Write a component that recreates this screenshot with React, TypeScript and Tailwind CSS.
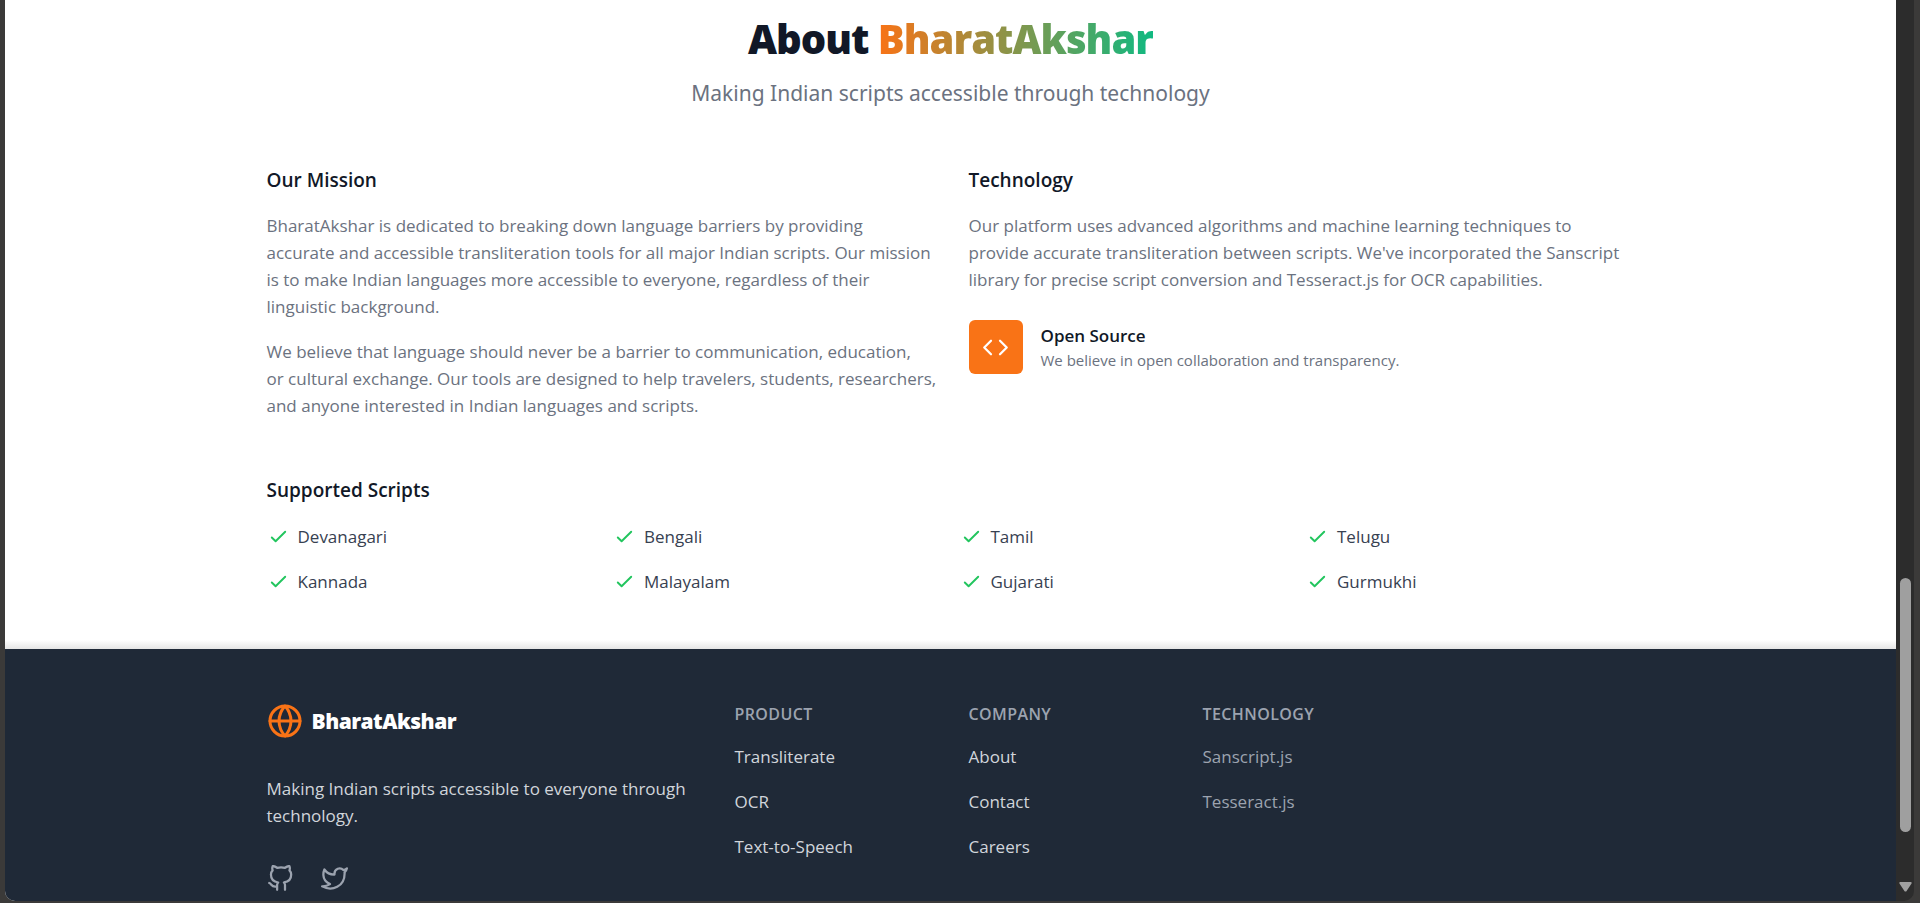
import { ReactNode } from "react";

const scripts = [
  "Devanagari",
  "Bengali",
  "Tamil",
  "Telugu",
  "Kannada",
  "Malayalam",
  "Gujarati",
  "Gurmukhi",
];

function SectionTitle({ children }: { children: ReactNode }) {
  return <h3 className="text-[19px] leading-[27px] font-semibold text-[#111827]">{children}</h3>;
}

function CheckIcon() {
  return (
    <svg
      className="size-[23px] shrink-0 text-[#22c55e]"
      viewBox="0 0 24 24"
      fill="none"
      stroke="currentColor"
      strokeWidth="2"
      strokeLinecap="round"
      strokeLinejoin="round"
      aria-hidden="true"
    >
      <path d="M5 13l4 4L19 7" />
    </svg>
  );
}

function FooterColumn({ title, links, muted }: { title: string; links: string[]; muted?: boolean }) {
  return (
    <nav aria-label={title}>
      <h4 className="text-[16px] leading-[22px] font-semibold tracking-wide text-[#9ca3af] uppercase">{title}</h4>
      <ul className="mt-[18px] space-y-[18px]">
        {links.map((link) => (
          <li key={link} className="text-[17px] leading-[27px]">
            <a href="#" className={muted ? "text-[#9ca3af]" : "text-[#d1d5db]"}>
              {link}
            </a>
          </li>
        ))}
      </ul>
    </nav>
  );
}

function About() {
  return (
    <section className="mx-auto w-full max-w-[1440px] px-9 pt-4 pb-[54px]">
      <div className="text-center">
        <h2 className="text-[40px] leading-[45px] font-extrabold tracking-tight text-[#111827]">
          About{" "}
          <span className="bg-[linear-gradient(to_right,#f97316,#10b981)] bg-clip-text text-transparent">
            BharatAkshar
          </span>
        </h2>
        <p className="mt-4 font-['Noto_Sans',sans-serif] text-[21px] leading-8 text-[#6b7280]">
          Making Indian scripts accessible through technology
        </p>
      </div>

      <div className="mt-[58px] grid grid-cols-2 gap-9">
        <div>
          <SectionTitle>Our Mission</SectionTitle>
          <div className="mt-[18px] -mr-2 space-y-[18px] text-[17px] leading-[27px] text-[#6b7280]">
            <p>
              BharatAkshar is dedicated to breaking down language barriers by providing accurate&nbsp;and accessible
              transliteration tools for all major Indian scripts. Our mission is&nbsp;to make Indian languages more
              accessible to everyone, regardless of their linguistic background.
            </p>
            <p>
              We believe that language should never be a barrier to communication, education, or&nbsp;cultural exchange.
              Our tools are designed to help travelers, students, researchers, and anyone interested in Indian languages
              and scripts.
            </p>
          </div>
        </div>
        <div>
          <SectionTitle>Technology</SectionTitle>
          <p className="mt-[18px] text-[17px] leading-[27px] text-[#6b7280]">
            Our platform uses advanced algorithms and machine learning techniques to provide accurate transliteration
            between scripts. We've incorporated the Sanscript library for precise script conversion and Tesseract.js for
            OCR capabilities.
          </p>
          <div className="mt-[27px] flex items-center gap-[18px]">
            <div className="flex size-[54px] shrink-0 items-center justify-center rounded-md bg-[#f97316] text-white">
              <svg
                className="size-[27px]"
                viewBox="0 0 24 24"
                fill="none"
                stroke="currentColor"
                strokeWidth="2"
                strokeLinecap="round"
                strokeLinejoin="round"
                aria-hidden="true"
              >
                <polyline points="16 18 22 12 16 6" />
                <polyline points="8 6 2 12 8 18" />
              </svg>
            </div>
            <div className="pb-[2px]">
              <h4 className="text-[17px] leading-[27px] font-semibold text-[#111827]">Open Source</h4>
              <p className="text-[15px] leading-[22px] text-[#6b7280]">
                We believe in open collaboration and transparency.
              </p>
            </div>
          </div>
        </div>
      </div>

      <div className="mt-[58px]">
        <SectionTitle>Supported Scripts</SectionTitle>
        <ul className="mt-[19px] grid grid-cols-4 gap-[18px]">
          {scripts.map((name) => (
            <li key={name} className="flex items-center gap-2 text-[17px] leading-[27px] text-[#374151]">
              <CheckIcon />
              {name}
            </li>
          ))}
        </ul>
      </div>
    </section>
  );
}

function Footer() {
  return (
    <footer className="flex-1 bg-[#1f2937]">
      <div className="mx-auto grid w-full max-w-[1440px] grid-cols-6 gap-9 px-9 pt-[54px]">
        <div className="col-span-2">
          <div className="flex items-center gap-[9px]">
            <svg
              className="size-9 text-[#f97316]"
              viewBox="0 0 24 24"
              fill="none"
              stroke="currentColor"
              strokeWidth="2"
              strokeLinecap="round"
              strokeLinejoin="round"
              aria-hidden="true"
            >
              <circle cx="12" cy="12" r="10" />
              <line x1="2" y1="12" x2="22" y2="12" />
              <path d="M12 2a15.3 15.3 0 0 1 4 10 15.3 15.3 0 0 1-4 10 15.3 15.3 0 0 1-4-10 15.3 15.3 0 0 1 4-10z" />
            </svg>
            <span className="text-[21px] leading-8 font-extrabold tracking-tight text-white">BharatAkshar</span>
          </div>
          <p className="mt-9 text-[17px] leading-[27px] text-[#d1d5db]">
            Making Indian scripts accessible to everyone through technology.
          </p>
          <div className="mt-9 flex gap-[27px] text-[#9ca3af]">
            <a href="#" aria-label="GitHub">
              <svg
                className="size-[27px]"
                viewBox="0 0 24 24"
                fill="none"
                stroke="currentColor"
                strokeWidth="2"
                strokeLinecap="round"
                strokeLinejoin="round"
              >
                <path d="M9 19c-5 1.5-5-2.5-7-3m14 6v-3.87a3.37 3.37 0 0 0-.94-2.61c3.14-.35 6.44-1.54 6.44-7A5.44 5.44 0 0 0 20 4.77 5.07 5.07 0 0 0 19.91 1S18.73.65 16 2.48a13.38 13.38 0 0 0-7 0C6.27.65 5.09 1 5.09 1A5.07 5.07 0 0 0 5 4.77a5.44 5.44 0 0 0-1.5 3.78c0 5.42 3.3 6.61 6.44 7A3.37 3.37 0 0 0 9 18.13V22" />
              </svg>
            </a>
            <a href="#" aria-label="Twitter">
              <svg
                className="size-[27px]"
                viewBox="0 0 24 24"
                fill="none"
                stroke="currentColor"
                strokeWidth="2"
                strokeLinecap="round"
                strokeLinejoin="round"
              >
                <path d="M23 3a10.9 10.9 0 0 1-3.14 1.53 4.48 4.48 0 0 0-7.86 3v1A10.66 10.66 0 0 1 3 4s-4 9 5 13a11.64 11.64 0 0 1-7 2c9 5 20 0 20-11.5a4.5 4.5 0 0 0-.08-.83A7.72 7.72 0 0 0 23 3z" />
              </svg>
            </a>
          </div>
        </div>
        <FooterColumn title="Product" links={["Transliterate", "OCR", "Text-to-Speech"]} />
        <FooterColumn title="Company" links={["About", "Contact", "Careers"]} />
        <FooterColumn title="Technology" links={["Sanscript.js", "Tesseract.js"]} muted />
      </div>
    </footer>
  );
}

function Scrollbar() {
  return (
    <div className="flex w-[18px] shrink-0 flex-col items-center bg-[#2c2c2c] pb-[9px]" aria-hidden="true">
      <div className="flex-[578]" />
      <div className="w-[11px] flex-[254] rounded-full bg-[#9f9f9f]" />
      <div className="flex-[50]" />
      <svg className="h-[10px] w-[13px] shrink-0 text-[#9f9f9f]" viewBox="0 0 13 10" fill="currentColor">
        <path d="M1.5 0h10a1 1 0 0 1 .9 1.7L7.6 9a1.3 1.3 0 0 1-2.2 0L.6 1.7A1 1 0 0 1 1.5 0z" />
      </svg>
    </div>
  );
}

export default function App() {
  return (
    <div className="h-screen overflow-hidden bg-[#3b3a39] pr-[6px] pb-[2px] pl-[5px] font-['Open_Sans','Noto_Sans',sans-serif]">
      <div className="flex h-full overflow-hidden rounded-b-[10px]">
        <main className="flex min-w-0 flex-1 flex-col overflow-hidden bg-white">
          <div className="shrink-0 bg-[linear-gradient(to_top,#e5e5e5,#ffffff_9px)]">
            <About />
          </div>
          <Footer />
        </main>
        <Scrollbar />
      </div>
    </div>
  );
}
